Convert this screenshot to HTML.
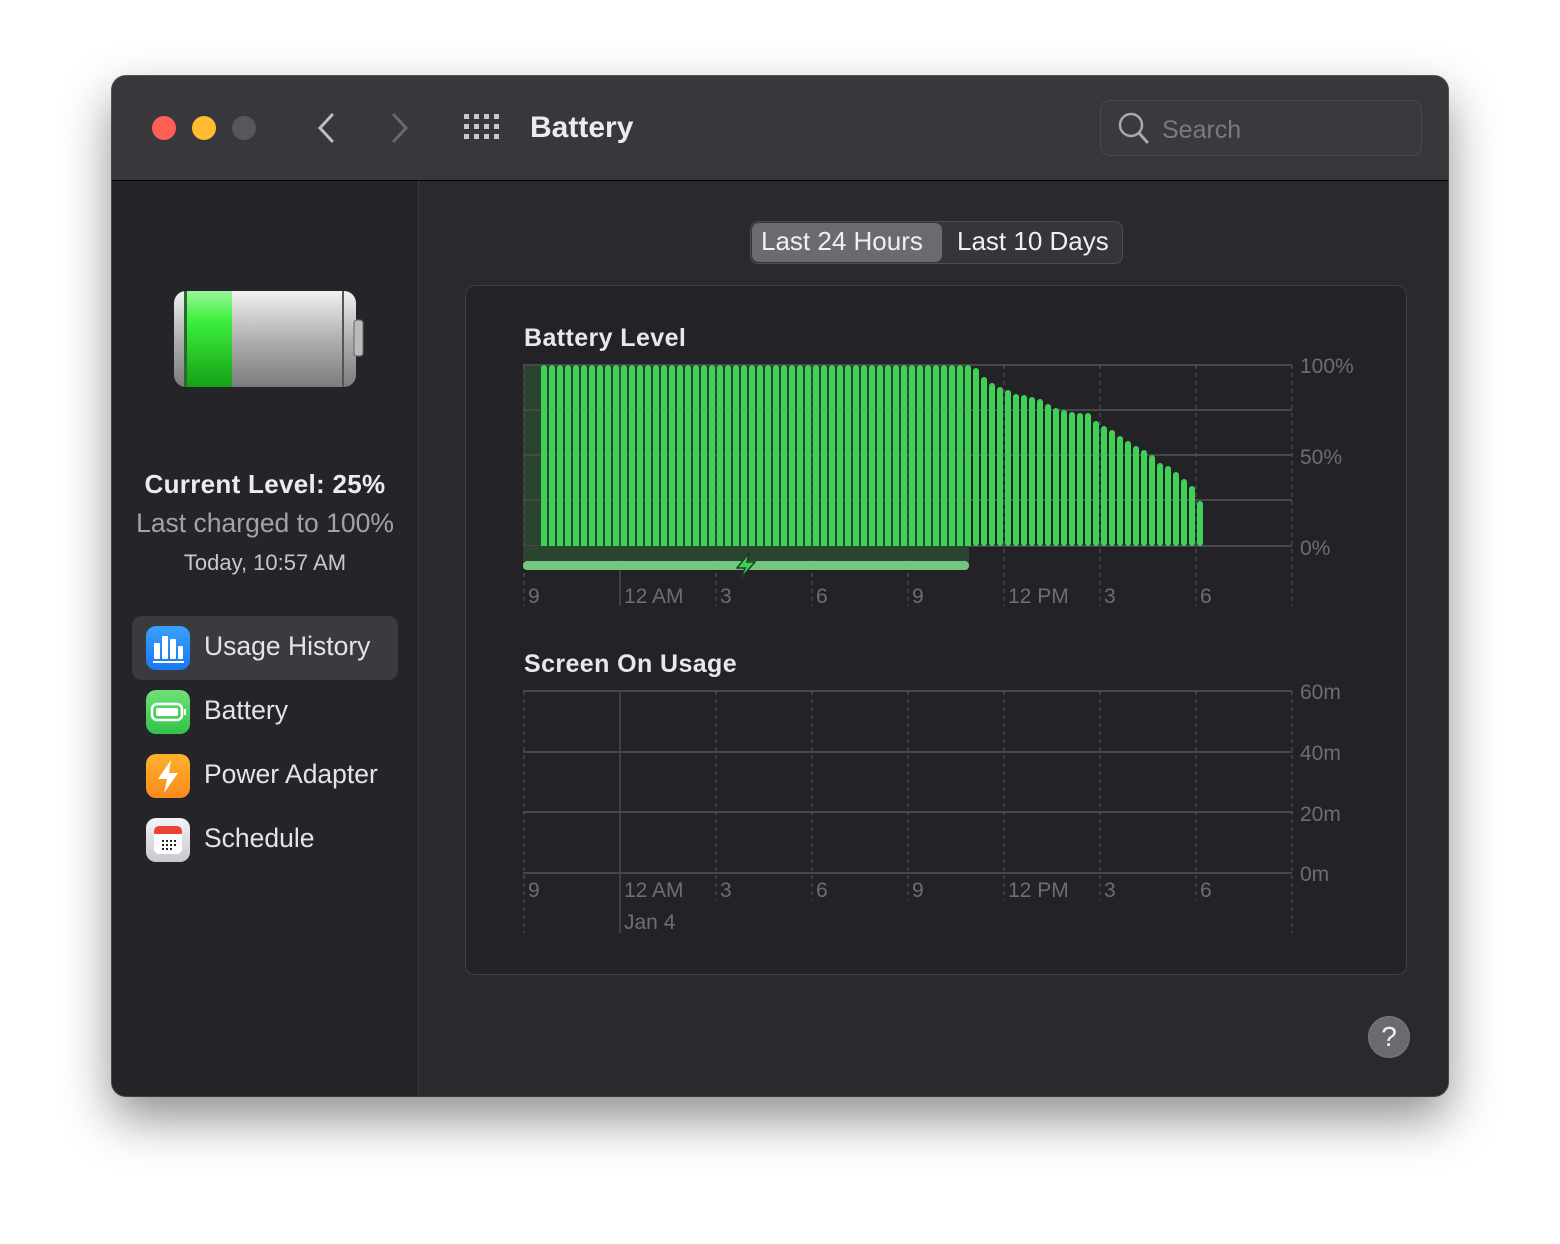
<!DOCTYPE html>
<html><head><meta charset="utf-8"><style>
body{margin:0;width:1560px;height:1244px;background:#fff;font-family:"Liberation Sans",sans-serif;position:relative;overflow:hidden}
.win{position:absolute;left:112px;top:76px;width:1336px;height:1020px;border-radius:14px;background:#2a292e;overflow:hidden;box-shadow:0 22px 50px rgba(0,0,0,.45),0 0 0 1px #5a595e}
.tb{position:absolute;left:0;top:0;width:1336px;height:104px;background:#38373c;border-bottom:1px solid #000}
.side{position:absolute;left:0;top:105px;width:306px;height:915px;background:#252429;border-right:1px solid #3a393e}
.t{position:absolute;white-space:nowrap}
.dot{position:absolute;top:40px;width:24px;height:24px;border-radius:50%}
.item{position:absolute;left:20px;width:266px;height:64px;border-radius:10px}
.ic{position:absolute;left:14px;top:10px;width:44px;height:44px;border-radius:10px}
.lbl{position:absolute;left:72px;top:15px;font-size:26.5px;color:#e4e4e6}
</style></head><body>
<div class="win">
<div class="tb">
<div class="dot" style="left:40px;background:#fe5f57"></div>
<div class="dot" style="left:80px;background:#febc2e"></div>
<div class="dot" style="left:120px;background:#58575c"></div>
<svg style="position:absolute;left:200px;top:34px" width="110" height="36"><path d="M20 5 L8 18 L20 31" stroke="#bdbcc0" stroke-width="3" fill="none" stroke-linecap="round"/><path d="M82 5 L94 18 L82 31" stroke="#68676c" stroke-width="3" fill="none" stroke-linecap="round"/></svg>
<svg style="position:absolute;left:352px;top:38px" width="38" height="28" fill="#c9c8cc"><rect x="0" y="0" width="5" height="5"/><rect x="10" y="0" width="5" height="5"/><rect x="20" y="0" width="5" height="5"/><rect x="30" y="0" width="5" height="5"/><rect x="0" y="10" width="5" height="5"/><rect x="10" y="10" width="5" height="5"/><rect x="20" y="10" width="5" height="5"/><rect x="30" y="10" width="5" height="5"/><rect x="0" y="20" width="5" height="5"/><rect x="10" y="20" width="5" height="5"/><rect x="20" y="20" width="5" height="5"/><rect x="30" y="20" width="5" height="5"/></svg>
<div class="t" style="left:418px;top:35px;font-size:30px;font-weight:bold;color:#ececee">Battery</div>
<div style="position:absolute;left:988px;top:24px;width:320px;height:54px;border:1px solid #4a494e;border-radius:10px;background:#3a393e"></div>
<svg style="position:absolute;left:1004px;top:34px" width="36" height="36"><circle cx="15" cy="15" r="11" stroke="#a9a8ac" stroke-width="2.5" fill="none"/><path d="M23 23 L31 32" stroke="#a9a8ac" stroke-width="3" stroke-linecap="round"/></svg>
<div class="t" style="left:1050px;top:40px;font-size:25px;color:#7b7a7f">Search</div>
</div>
<div class="side">
<svg style="position:absolute;left:60px;top:108px" width="200" height="100">
<defs><linearGradient id="g1" x1="0" y1="0" x2="0" y2="1"><stop offset="0" stop-color="#f2f2f2"/><stop offset=".5" stop-color="#b0b0b0"/><stop offset="1" stop-color="#7c7c7c"/></linearGradient>
<linearGradient id="g2" x1="0" y1="0" x2="0" y2="1"><stop offset="0" stop-color="#9af59a"/><stop offset=".3" stop-color="#3ef03e"/><stop offset="1" stop-color="#16a016"/></linearGradient></defs>
<rect x="2" y="2" width="182" height="96" rx="12" fill="url(#g1)"/>
<rect x="14" y="2" width="46" height="96" fill="url(#g2)"/>
<rect x="12" y="2" width="3" height="96" fill="#2a6a2a"/>
<rect x="170" y="2" width="2" height="96" fill="#555"/>
<rect x="182" y="31" width="9" height="36" rx="3" fill="#bbb" stroke="#666"/>
</svg>
<div class="t" style="left:0;width:306px;text-align:center;top:288px;font-size:26px;font-weight:bold;color:#ececee;letter-spacing:.3px">Current Level: 25%</div>
<div class="t" style="left:0;width:306px;text-align:center;top:327px;font-size:26.5px;color:#a3a2a7">Last charged to 100%</div>
<div class="t" style="left:0;width:306px;text-align:center;top:369px;font-size:22px;color:#c8c7cb">Today, 10:57 AM</div>
<div class="item" style="top:435px;background:#3b3a3f"><div class="ic" style="background:linear-gradient(#3aa0ff,#1a78f0)"><svg width="44" height="44" fill="#fff"><rect x="8" y="17" width="6" height="16" rx="1"/><rect x="16" y="10" width="6" height="23" rx="1"/><rect x="24" y="13" width="6" height="20" rx="1"/><rect x="32" y="20" width="5" height="13" rx="1"/><rect x="7" y="35" width="31" height="2"/></svg></div><div class="lbl">Usage History</div></div>
<div class="item" style="top:499px"><div class="ic" style="background:linear-gradient(#6fe07a,#32c24a)"><svg width="44" height="44"><rect x="6" y="14" width="30" height="16" rx="5" stroke="#fff" stroke-width="2.5" fill="none"/><rect x="10" y="18" width="22" height="8" rx="2" fill="#fff"/><rect x="38" y="19" width="2" height="6" fill="#fff"/></svg></div><div class="lbl">Battery</div></div>
<div class="item" style="top:563px"><div class="ic" style="background:linear-gradient(#fdb22d,#fb8a1d)"><svg width="44" height="44"><path d="M25 6 L12 25 H21 L18 39 L32 19 H23 Z" fill="#fff"/></svg></div><div class="lbl">Power Adapter</div></div>
<div class="item" style="top:627px"><div class="ic" style="background:linear-gradient(#f4f4f6,#c8c8cc)"><svg width="44" height="44"><rect x="8" y="8" width="28" height="28" rx="5" fill="#fff"/><path d="M8 13 a5 5 0 0 1 5 -5 h18 a5 5 0 0 1 5 5 v3 h-28z" fill="#eb4236"/><g fill="#222"><rect x="16" y="22" width="2" height="2"/><rect x="20" y="22" width="2" height="2"/><rect x="24" y="22" width="2" height="2"/><rect x="28" y="22" width="2" height="2"/><rect x="16" y="26" width="2" height="2"/><rect x="20" y="26" width="2" height="2"/><rect x="24" y="26" width="2" height="2"/><rect x="28" y="26" width="2" height="2"/><rect x="16" y="30" width="2" height="2"/><rect x="20" y="30" width="2" height="2"/><rect x="24" y="30" width="2" height="2"/></g></svg></div><div class="lbl">Schedule</div></div>
</div>
<div style="position:absolute;left:638px;top:145px;width:371px;height:41px;border:1px solid #4d4c51;border-radius:8px;background:#36353a"></div>
<div style="position:absolute;left:640px;top:147px;width:190px;height:39px;border-radius:7px;background:#6b6a6f"></div>
<div class="t" style="left:649px;top:150px;font-size:26px;color:#f0f0f2">Last 24 Hours</div>
<div class="t" style="left:845px;top:150px;font-size:26px;color:#f0f0f2">Last 10 Days</div>
<div style="position:absolute;left:353px;top:209px;width:940px;height:688px;border:1px solid #3f3e43;border-radius:10px;background:#232227"></div>
<div style="position:absolute;left:1256px;top:940px;width:40px;height:40px;border-radius:50%;background:#6b6a6f;border:1px solid #7a797e;color:#f0f0f0;font-size:28px;text-align:center;line-height:40px">?</div>
</div>
<svg style="position:absolute;left:0;top:0" width="1560" height="1244" font-family="Liberation Sans, sans-serif">
<defs><pattern id="bp" x="541" y="0" width="8" height="1244" patternUnits="userSpaceOnUse"><rect x="0" y="365" width="6" height="184" rx="3" fill="#3ed155"/></pattern></defs>
<text x="524" y="346" font-size="25" font-weight="bold" fill="#e8e8ea" letter-spacing=".4">Battery Level</text>
<rect x="523" y="365" width="446" height="196" fill="#2b4430"/>
<g stroke="#48474c" stroke-width="2"><line x1="523" y1="365" x2="1292" y2="365"/><line x1="523" y1="410" x2="1292" y2="410"/><line x1="523" y1="455" x2="1292" y2="455"/><line x1="523" y1="500" x2="1292" y2="500"/><line x1="523" y1="546" x2="1292" y2="546"/></g>
<g stroke="#4a494e" stroke-width="1.5" stroke-dasharray="4 4"><line x1="524" y1="365" x2="524" y2="606"/><line x1="716" y1="365" x2="716" y2="606"/><line x1="812" y1="365" x2="812" y2="606"/><line x1="908" y1="365" x2="908" y2="606"/><line x1="1004" y1="365" x2="1004" y2="606"/><line x1="1100" y1="365" x2="1100" y2="606"/><line x1="1196" y1="365" x2="1196" y2="606"/><line x1="1292" y1="365" x2="1292" y2="606"/></g>
<line x1="620" y1="365" x2="620" y2="606" stroke="#4a494e" stroke-width="1.5"/>
<rect x="541" y="365" width="432" height="181" fill="url(#bp)"/>
<rect x="523" y="546" width="446" height="14" fill="#2b4430"/>
<g fill="#3ed155">
<rect x="973" y="368" width="6" height="178" rx="3"/><rect x="981" y="377" width="6" height="169" rx="3"/><rect x="989" y="383" width="6" height="163" rx="3"/><rect x="997" y="387" width="6" height="159" rx="3"/><rect x="1005" y="390" width="6" height="156" rx="3"/><rect x="1013" y="394" width="6" height="152" rx="3"/><rect x="1021" y="395" width="6" height="151" rx="3"/><rect x="1029" y="397" width="6" height="149" rx="3"/><rect x="1037" y="399" width="6" height="147" rx="3"/><rect x="1045" y="404" width="6" height="142" rx="3"/><rect x="1053" y="408" width="6" height="138" rx="3"/><rect x="1061" y="410" width="6" height="136" rx="3"/><rect x="1069" y="412" width="6" height="134" rx="3"/><rect x="1077" y="413" width="6" height="133" rx="3"/><rect x="1085" y="413" width="6" height="133" rx="3"/><rect x="1093" y="421" width="6" height="125" rx="3"/><rect x="1101" y="426" width="6" height="120" rx="3"/><rect x="1109" y="430" width="6" height="116" rx="3"/><rect x="1117" y="436" width="6" height="110" rx="3"/><rect x="1125" y="441" width="6" height="105" rx="3"/><rect x="1133" y="446" width="6" height="100" rx="3"/><rect x="1141" y="450" width="6" height="96" rx="3"/><rect x="1149" y="455" width="6" height="91" rx="3"/><rect x="1157" y="463" width="6" height="83" rx="3"/><rect x="1165" y="466" width="6" height="80" rx="3"/><rect x="1173" y="472" width="6" height="74" rx="3"/><rect x="1181" y="479" width="6" height="67" rx="3"/><rect x="1189" y="486" width="6" height="60" rx="3"/><rect x="1197" y="501" width="6" height="45" rx="3"/>
</g>
<rect x="523" y="561" width="446" height="9" rx="4" fill="#74c67f"/>
<path d="M749 553 L737 568 H745 L741 578 L755 562 H747 Z" fill="#3ed155" stroke="#1f3b22" stroke-width="1.5"/>
<g font-size="21" fill="#6e6d72"><text x="1300" y="373">100%</text><text x="1300" y="464">50%</text><text x="1300" y="555">0%</text>
<text x="528" y="603">9</text><text x="624" y="603">12 AM</text><text x="720" y="603">3</text><text x="816" y="603">6</text><text x="912" y="603">9</text><text x="1008" y="603">12 PM</text><text x="1104" y="603">3</text><text x="1200" y="603">6</text></g>
<text x="524" y="672" font-size="25" font-weight="bold" fill="#e8e8ea" letter-spacing=".4">Screen On Usage</text>
<g stroke="#48474c" stroke-width="2"><line x1="523" y1="691" x2="1292" y2="691"/><line x1="523" y1="752" x2="1292" y2="752"/><line x1="523" y1="812" x2="1292" y2="812"/><line x1="523" y1="873" x2="1292" y2="873"/></g>
<g stroke="#4a494e" stroke-width="1.5" stroke-dasharray="4 4"><line x1="524" y1="691" x2="524" y2="933"/><line x1="716" y1="691" x2="716" y2="900"/><line x1="812" y1="691" x2="812" y2="900"/><line x1="908" y1="691" x2="908" y2="900"/><line x1="1004" y1="691" x2="1004" y2="900"/><line x1="1100" y1="691" x2="1100" y2="900"/><line x1="1196" y1="691" x2="1196" y2="900"/><line x1="1292" y1="691" x2="1292" y2="933"/></g>
<line x1="620" y1="691" x2="620" y2="933" stroke="#4a494e" stroke-width="1.5"/>
<g font-size="21" fill="#6e6d72"><text x="1300" y="699">60m</text><text x="1300" y="760">40m</text><text x="1300" y="821">20m</text><text x="1300" y="881">0m</text>
<text x="528" y="897">9</text><text x="624" y="897">12 AM</text><text x="720" y="897">3</text><text x="816" y="897">6</text><text x="912" y="897">9</text><text x="1008" y="897">12 PM</text><text x="1104" y="897">3</text><text x="1200" y="897">6</text><text x="624" y="929">Jan 4</text></g>
</svg>
</body></html>
